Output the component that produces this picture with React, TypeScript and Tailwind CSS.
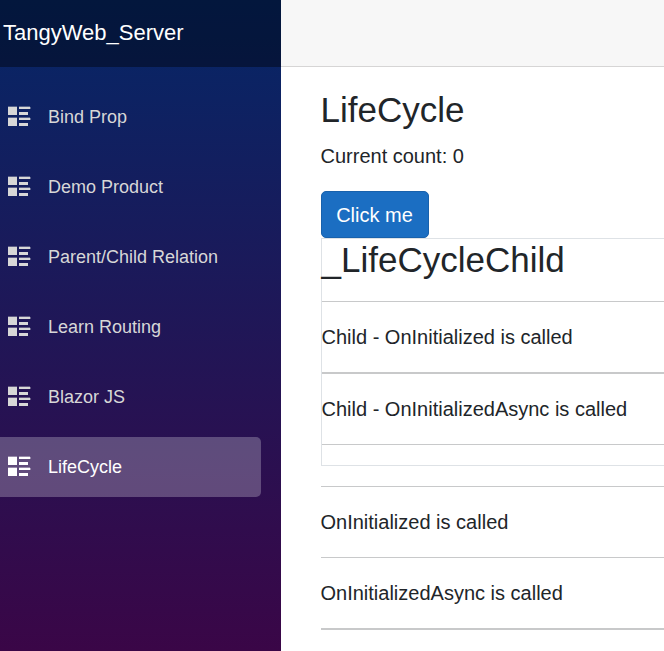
const links = [
  'Bind Prop',
  'Demo Product',
  'Parent/Child Relation',
  'Learn Routing',
  'Blazor JS',
  'LifeCycle',
];

function ListRichIcon() {
  return (
    <svg
      className="h-[22px] w-[23px] shrink-0"
      viewBox="0 0 23 22"
      fill="currentColor"
      shapeRendering="crispEdges"
      aria-hidden="true"
    >
      <path d="M0 1h9v8H0zM11 1h11v2H11zM11 6h9v3h-9zM0 12h9v8H0zM11 12h11v2H11zM11 17h9v3h-9z" />
      <path opacity=".35" d="M0 0h9v1H0zM11 0h11v1H11zM0 11h9v1H0zM11 11h11v1H11zM22 1h1v2h-1zM22 12h1v2h-1z" />
    </svg>
  );
}

function Sidebar() {
  return (
    <aside className="h-full w-[281px] shrink-0 bg-[linear-gradient(180deg,rgb(5,39,103)_0px,#3a0647_650px)]">
      <div className="flex h-[67px] items-center bg-black/40 pb-0.5 pl-[3px] text-[22px] text-white">
        TangyWeb_Server
      </div>
      <nav className="flex flex-col gap-2.5 pt-5 pr-5 text-[18px]">
        {links.map((label) => (
          <a
            key={label}
            href="#"
            className={
              label === 'LifeCycle'
                ? 'flex h-[60px] items-center gap-[17px] rounded-r-[5px] bg-white/25 pl-2 text-white'
                : 'flex h-[60px] items-center gap-[17px] pl-2 text-[#d7d7d7]'
            }
          >
            <ListRichIcon />
            {label}
          </a>
        ))}
      </nav>
    </aside>
  );
}

export default function App() {
  return (
    <div className="flex h-[651px] w-[664px] overflow-hidden bg-white font-['Liberation_Sans',Arial,sans-serif] text-[20px] leading-[30px] text-[#212529]">
      <Sidebar />
      <main className="min-w-0 flex-1">
        <header className="h-[67px] border-b border-[#d6d5d5] bg-[#f7f7f7]" />
        <article className="pt-[22px] pl-[39.5px]">
          <h1 className="mb-[10px] text-[35px] leading-[42px]">LifeCycle</h1>
          <p className="mb-5">Current count: 0</p>
          <button className="block h-[47px] w-[108px] rounded-[5px] border border-[#1861ac] bg-[#1b6ec2] text-white">
            Click me
          </button>
          <section className="h-[228px] border border-r-0 border-[#dee2e6]">
            <h2 className="mb-5 text-[35px] leading-[42px]">_LifeCycleChild</h2>
            <hr className="mb-5 border-[#c8c9ca]" />
            <p className="mb-5">Child - OnInitialized is called</p>
            <hr className="mb-5 border-t-2 border-[#c8c9ca]" />
            <p className="mb-5">Child - OnInitializedAsync is called</p>
            <hr className="border-[#c8c9ca]" />
          </section>
          <hr className="my-5 border-[#c8c9ca]" />
          <p className="mb-5">OnInitialized is called</p>
          <hr className="mb-5 border-[#c8c9ca]" />
          <p className="mb-5">OnInitializedAsync is called</p>
          <hr className="border-t-2 border-[#c8c9ca]" />
        </article>
      </main>
    </div>
  );
}
